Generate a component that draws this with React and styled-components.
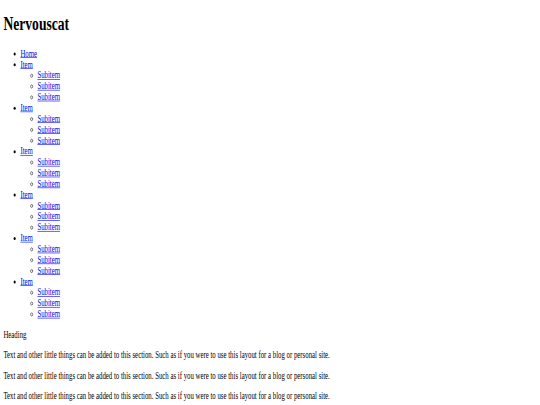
import React from "react";
import styled, { createGlobalStyle } from "styled-components";

const GlobalStyle = createGlobalStyle`
  html, body {
    margin: 0;
    padding: 0;
    background: #ffffff;
    overflow: hidden;
  }
`;

// the page is drawn at desktop size and squeezed into the small window
const Page = styled.div`
  display: flow-root;
  width: 1256px;
  padding: 0 8px;
  font-family: "Liberation Serif", "Times New Roman", serif;
  font-size: 16px;
  color: #000000;
  transform: scale(${({ sx }) => sx}, ${({ sy }) => sy});
  transform-origin: top left;
`;

const Title = styled.h1`
  font-size: 32px;
  font-weight: bold;
  margin: 21.44px 0;
`;

const Menu = styled.ul`
  list-style-type: ${({ nested }) => (nested ? "circle" : "disc")};
  margin: ${({ nested }) => (nested ? "0" : "16px 0")};
  padding-left: 40px;
`;

const MenuLink = styled.a`
  color: #0000ee;
  text-decoration: underline;
`;

const Heading = styled.p`
  margin: 16px 0;
`;

const Text = styled.p`
  margin: 16px 0;
`;

const items = [1, 2, 3, 4, 5, 6];
const subitems = [1, 2, 3];
const blurb =
  "Text and other little things can be added to this section. Such as if you were to use this layout for a blog or personal site.";

export default function App() {
  return (
    <>
      <GlobalStyle />
      <Page sx={0.425} sy={0.603}>
        <Title>Nervouscat</Title>
        <Menu>
          <li>
            <MenuLink href="#">Home</MenuLink>
          </li>
          {items.map((i) => (
            <li key={i}>
              <MenuLink href="#">Item</MenuLink>
              <Menu nested>
                {subitems.map((s) => (
                  <li key={s}>
                    <MenuLink href="#">Subitem</MenuLink>
                  </li>
                ))}
              </Menu>
            </li>
          ))}
        </Menu>
        <Heading>Heading</Heading>
        <Text>{blurb}</Text>
        <Text>{blurb}</Text>
        <Text>{blurb}</Text>
      </Page>
    </>
  );
}
